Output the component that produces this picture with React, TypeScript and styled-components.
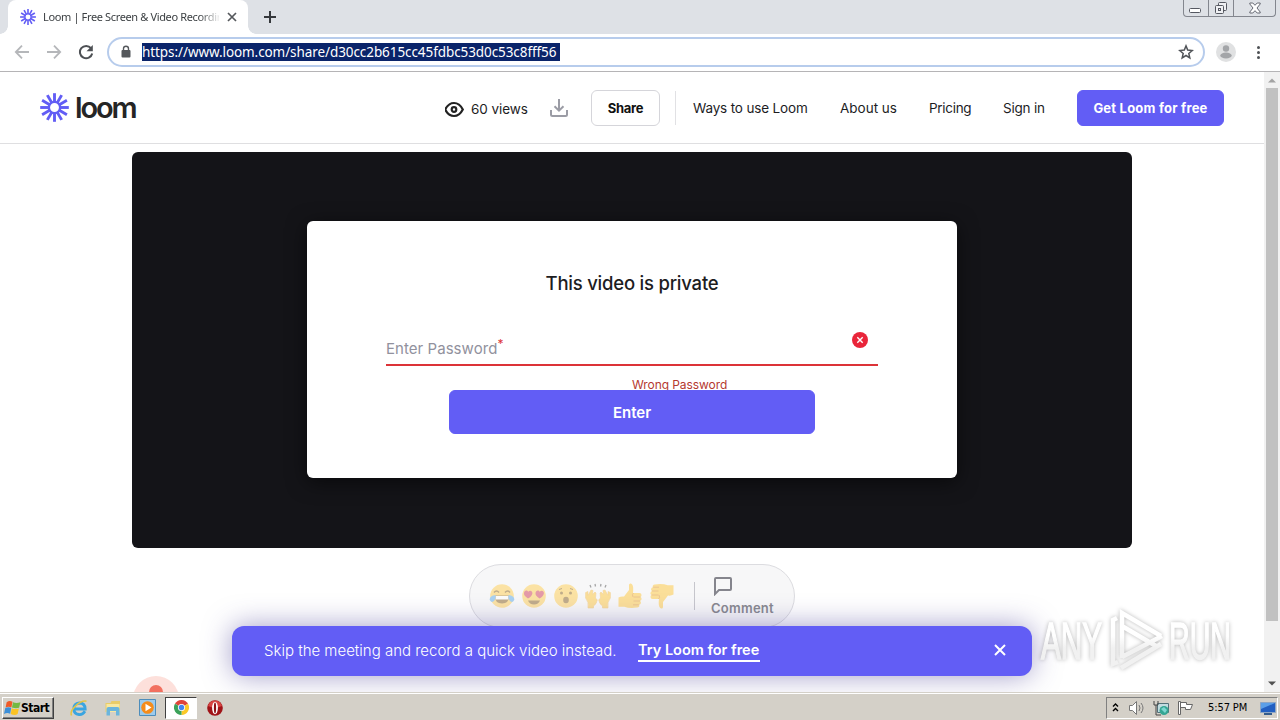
import React from 'react';
import styled, { createGlobalStyle } from 'styled-components';

const GlobalStyle = createGlobalStyle`
  * {
    box-sizing: border-box;
  }
  body {
    margin: 0;
    overflow: hidden;
    background: #fff;
  }
  svg {
    display: block;
    flex: none;
  }
`;

const Screen = styled.div`
  display: flex;
  flex-direction: column;
  position: relative;
  width: 1280px;
  height: 720px;
  overflow: hidden;
  font-family: Inter, 'Liberation Sans', sans-serif;
  color: #1d1d1f;
`;

/* ---------- browser ---------- */

const TabStrip = styled.div`
  display: flex;
  align-items: flex-start;
  height: 34px;
  background: #dee1e6;
`;

const TabCurve = styled.div<{ $side: 'left' | 'right' }>`
  align-self: flex-end;
  width: 8px;
  height: 8px;
  background: radial-gradient(
    circle at ${({ $side }) => ($side === 'left' ? '0 0' : '100% 0')},
    #dee1e6 7.5px,
    #fff 8px
  );
`;

const Tab = styled.div`
  display: flex;
  align-items: center;
  width: 240px;
  height: 34px;
  padding: 0 11px 0 12px;
  border-radius: 8px 8px 0 0;
  background: #fff;
`;

const TabTitle = styled.span`
  flex: none;
  width: 176px;
  margin: 0 8px 0 7px;
  white-space: nowrap;
  font: 11px/16px 'Noto Sans', sans-serif;
  letter-spacing: -0.36px;
  color: #3c4043;
  mask-image: linear-gradient(90deg, #000 156px, transparent 178px);
`;

const NewTab = styled.div`
  padding: 11px 7px;
`;

const WindowButtons = styled.div`
  display: flex;
  width: 93px;
  height: 17px;
  margin: 0 4px 0 auto;
  border: 1px solid #83868e;
  border-top: 0;
  border-radius: 0 0 4px 4px;
`;

const WindowButton = styled.div<{ $width: number }>`
  display: flex;
  align-items: center;
  justify-content: center;
  width: ${({ $width }) => $width}px;
  & + & {
    border-left: 1px solid #83868e;
  }
`;

const Toolbar = styled.div`
  display: flex;
  align-items: center;
  height: 38px;
  padding: 0 12px 2px 14px;
  border-bottom: 1px solid #b5b4b6;
  background: #fff;
`;

const ToolbarIcon = styled.div<{ $gap: number }>`
  margin-right: ${({ $gap }) => $gap}px;
`;

const AddressBar = styled.div`
  display: flex;
  align-items: center;
  width: 1098px;
  height: 30px;
  padding: 0 9px 0 11px;
  border: 2px solid #b7ccec;
  border-radius: 15px;
`;

const Url = styled.span`
  width: 418px;
  height: 18px;
  margin: 0 auto 0 10px;
  background: #0a246a;
  color: #fff;
  white-space: nowrap;
  font: 13.5px/18px 'Noto Sans', sans-serif;
  letter-spacing: -0.08px;
`;

const Avatar = styled.div`
  margin: 0 19px 0 11px;
`;

/* ---------- page ---------- */

const Viewport = styled.div`
  display: flex;
  height: 620px;
`;

const Page = styled.div`
  display: flex;
  flex-direction: column;
  align-items: center;
  position: relative;
  width: 1264px;
  height: 620px;
  overflow: hidden;
`;

const Header = styled.header`
  display: flex;
  align-items: center;
  width: 100%;
  height: 72px;
  padding: 0 40px;
  border-bottom: 1px solid #dfdfe1;
`;

const Wordmark = styled.span`
  width: 62px;
  margin: 0 auto 0 6px;
  font: 600 29px/30px Inter, sans-serif;
  letter-spacing: -2.1px;
  color: #252525;
`;

const Views = styled.span`
  width: 58px;
  margin: 2px 20px 0 6px;
  font-size: 13.5px;
  line-height: 18px;
  letter-spacing: -0.05px;
  white-space: nowrap;
`;

const Button = styled.button<{ $primary?: boolean; $width: number; $spacing?: number }>`
  width: ${({ $width }) => $width}px;
  height: 36px;
  padding: 0;
  border: 1px solid ${({ $primary }) => ($primary ? '#625df5' : '#d5d5da')};
  border-radius: 6px;
  background: ${({ $primary }) => ($primary ? '#625df5' : '#fff')};
  color: ${({ $primary }) => ($primary ? '#fff' : '#111')};
  font: 700 13px/18px Inter, sans-serif;
  letter-spacing: ${({ $spacing = 0 }) => $spacing}px;
  white-space: nowrap;
`;

const ShareButton = styled(Button)`
  margin: 0 15px 0 22px;
`;

const Divider = styled.div<{ $height: number; $color: string }>`
  width: 1px;
  height: ${({ $height }) => $height}px;
  background: ${({ $color }) => $color};
`;

const Nav = styled.nav`
  display: flex;
  gap: 32px;
  margin: 1px 32px 0 17px;
`;

const NavLink = styled.a<{ $width: number; $spacing: number }>`
  width: ${({ $width }) => $width}px;
  font-size: 13.5px;
  line-height: 18px;
  letter-spacing: ${({ $spacing }) => $spacing}px;
  white-space: nowrap;
`;

const Player = styled.div`
  display: flex;
  justify-content: center;
  width: 1000px;
  height: 396px;
  margin: 8px 0 16px;
  padding-top: 69px;
  flex: none;
  border-radius: 6px;
  background: #141418;
`;

const Dialog = styled.form`
  display: flex;
  flex-direction: column;
  align-items: center;
  width: 650px;
  height: 257px;
  border-radius: 6px;
  background: #fff;
  box-shadow: 0 4px 20px rgba(0, 0, 0, 0.55);
`;

const Title = styled.h1`
  margin: 50px 0 0;
  font: 500 18.5px/24px Inter, sans-serif;
  letter-spacing: -0.22px;
  white-space: nowrap;
`;

const Field = styled.div`
  display: flex;
  justify-content: space-between;
  width: 492px;
  height: 51px;
  margin-top: 20px;
  border-bottom: 2px solid #dc3338;
`;

const Label = styled.label`
  padding-top: 24px;
  font-size: 15px;
  line-height: 20px;
  letter-spacing: 0.05px;
  color: #91919d;
  white-space: nowrap;
  sup {
    font-size: 12px;
    line-height: 0;
    vertical-align: 6px;
    color: #dc3338;
  }
`;

const FieldError = styled.div`
  padding: 17px 10px 0 0;
`;

const Message = styled.p`
  align-self: flex-start;
  height: 13px;
  margin: 11px 0 0 325px;
  font-size: 12px;
  line-height: 16px;
  letter-spacing: -0.08px;
  color: #b5392f;
  white-space: nowrap;
`;

const Submit = styled(Button)`
  height: 44px;
  padding-top: 2px;
  font-size: 15px;
  font-weight: 600;
`;

const Reactions = styled.div`
  display: flex;
  align-items: center;
  width: 326px;
  height: 64px;
  padding-left: 19px;
  flex: none;
  border: 1px solid #dcdce0;
  border-radius: 32px;
  background: #f7f7f8;
`;

const EmojiRow = styled.div`
  display: flex;
  gap: 6px;
  margin-right: 19px;
  opacity: 0.5;
`;

const Comment = styled.div`
  display: flex;
  flex-direction: column;
  gap: 4px;
  padding-left: 16px;
  font-size: 13px;
  font-weight: 600;
  line-height: 16px;
  letter-spacing: 0.25px;
  color: #898990;
`;

const Banner = styled.div`
  display: flex;
  align-items: center;
  position: absolute;
  left: 232px;
  top: 554px;
  width: 800px;
  height: 50px;
  padding: 0 25px 2px 32px;
  border-radius: 12px;
  background: #625df5;
  box-shadow: 0 0 28px rgba(70, 60, 150, 0.5);
  color: #fff;
  font-size: 15px;
  line-height: 20px;
  white-space: nowrap;
`;

const BannerText = styled.span`
  width: 374px;
  margin-top: 1px;
  font-weight: 300;
`;

const BannerLink = styled.a`
  width: 122px;
  margin: 2px auto 0 0;
  border-bottom: 2px solid #fff;
  font-size: 14.5px;
  font-weight: 600;
`;

const RecordBubble = styled.div`
  display: flex;
  justify-content: center;
  position: absolute;
  left: 133px;
  top: 604px;
  width: 46px;
  height: 46px;
  padding-top: 9px;
  border-radius: 50%;
  background: #fde0db;
  &::after {
    content: '';
    width: 14px;
    height: 14px;
    border-radius: 50%;
    background: #f2705f;
  }
`;

const Watermark = styled.svg`
  position: absolute;
  left: 1032px;
  top: 602px;
  filter: drop-shadow(0 0 2px rgba(0, 0, 0, 0.28));
`;

const Scrollbar = styled.div`
  display: flex;
  flex-direction: column;
  align-items: center;
  justify-content: space-between;
  width: 16px;
  height: 620px;
  padding: 6px 0 6px;
  background: #f1f1f1;
`;

const Thumb = styled.div`
  width: 12px;
  height: 533px;
  margin: 5px 0 auto;
  background: #c1c1c1;
`;

/* ---------- taskbar ---------- */

const Taskbar = styled.div`
  display: flex;
  align-items: center;
  height: 28px;
  padding: 2px 2px 0;
  border-top: 1px solid #d4d0c8;
  box-shadow: inset 0 1px #fff;
  background: #d4d0c8;
`;

const StartButton = styled.div`
  display: flex;
  align-items: center;
  width: 52px;
  height: 22px;
  padding-left: 1px;
  border: 1px solid;
  border-color: #fff #404040 #404040 #fff;
  box-shadow: inset -1px -1px #808080;
  font: bold 12px/16px 'DejaVu Sans Condensed', 'DejaVu Sans', sans-serif;
  letter-spacing: -0.5px;
  color: #000;
`;

const Task = styled.div<{ $active?: boolean }>`
  display: flex;
  align-items: center;
  justify-content: center;
  width: 32px;
  height: 22px;
  margin-right: 2px;
  border: 1px solid;
  border-color: ${({ $active }) => ($active ? '#404040 #fff #fff #404040' : 'transparent')};
  background: ${({ $active }) => ($active ? '#fff' : 'transparent')};
`;

const TaskList = styled.div`
  display: flex;
  margin-left: 9px;
`;

const Tray = styled.div`
  display: flex;
  align-items: center;
  width: 172px;
  height: 22px;
  margin-left: auto;
  padding-left: 4px;
  border: 1px solid;
  border-color: #808080 #fff #fff #808080;
`;

const TrayIcon = styled.div`
  margin-left: 7px;
`;

const Clock = styled.span`
  width: 52px;
  margin-left: 14px;
  font: 11px/14px 'DejaVu Sans Condensed', 'DejaVu Sans', sans-serif;
  letter-spacing: -0.1px;
  color: #000;
  white-space: nowrap;
`;

/* ---------- icons ---------- */

const LoomMark = ({ size }: { size: number }) => (
  <svg width={size} height={size} viewBox="-15 -15 30 30" fill="none" stroke="#625df5">
    <circle r="5.8" strokeWidth="2.4" />
    {Array.from({ length: 12 }, (_, i) => (
      <path key={i} d="M0 -5.8V-14.8" strokeWidth="3" transform={`rotate(${i * 30})`} />
    ))}
  </svg>
);

const Arrow = ({ back }: { back?: boolean }) => (
  <svg width="16" height="16" viewBox="0 0 16 16" fill="none" stroke="#b5b7ba" strokeWidth="1.8">
    <path d={back ? 'M15 8H2M8 1.6L1.8 8 8 14.4' : 'M1 8h13M8 1.6L14.2 8 8 14.4'} />
  </svg>
);

const Face = ({ children }: { children: React.ReactNode }) => (
  <svg width="26" height="26" viewBox="0 0 26 26">
    <circle cx="13" cy="13" r="11.8" fill="#ffcf52" />
    {children}
  </svg>
);

const Heart = ({ x }: { x: number }) => (
  <path
    transform={`translate(${x} 7)`}
    fill="#d2405c"
    d="M4 8.5C1 6.5-.2 5 0 3 .2.2 3.2-.4 4.2 1.8 5.5-.2 8.6.6 8.4 3.2 8.2 5.4 6.4 7.2 4 8.5z"
  />
);

const JoyFace = () => (
  <Face>
    <path d="M5 9.5q2.5-3 5 0M16 9.5q2.5-3 5 0" fill="none" stroke="#8a6420" strokeWidth="1.4" />
    <path d="M5.5 12.5h15q-.6 8-7.5 8t-7.5-8z" fill="#8a6420" />
    <path d="M6.5 13h13v3.500h-13z" fill="#fff" />
    <path
      d="M6.500 12Q0 13 .8 17q2 4 5 0 1-2 .7-5zM19.500 12q6.500 1 5.700 5-2 4-5 0-1-2-.7-5z"
      fill="#5dadec"
    />
  </Face>
);

const RaisedHands = () => (
  <svg width="26" height="26" viewBox="0 0 26 26">
    <path
      d="M3 25Q4 19 .6 15V9.500L3 8.500v4L6 7l2 .5-.5 4 2.500-2.500 1 1L10.500 15l1.800 2q-.6 4-3.800 6v2zM23 25q-1-6 2.400-10V9.500L23 8.500v4L20 7l-2 .5.5 4-2.500-2.500-1 1 .5 5-1.800 2q.6 4 3.800 6v2z"
      fill="#ffc83d"
      stroke="#eeb040"
      strokeWidth=".6"
    />
    <path d="M5 2l1 2.500M10 1l.5 2.500M16 1l-.5 2.500M21 2l-1 2.500" stroke="#555" strokeWidth="1.300" />
  </svg>
);

const Thumbs = ({ down }: { down?: boolean }) => (
  <svg width="26" height="26" viewBox="0 0 26 26">
    <g transform={down ? 'rotate(180 13 13)' : undefined}>
      <path
        d="M1.500 14.500Q4 13 7 13.500L12 7V2q0-1.800 1.800-1.500C16.500 1 16.500 6 16 10h6.500q2 0 2 2t-1.200 2q1.500.4 1.300 2t-1.600 2q1.200.5.900 2t-1.700 1.700q.7 2.600-2 2.900-8 1-13-.9H1.500z"
        fill="#ffc83d"
      />
      <path
        d="M16.500 14h7M16.500 18h6.500M16 21.800h5.800M16.500 10q-2 1.500-.5 4"
        stroke="#e2952d"
        fill="none"
      />
    </g>
  </svg>
);

const WindowsFlag = () => (
  <svg width="17" height="17" viewBox="0 0 16 16">
    <path d="M2.500 3Q5 1 8 2.500L7 7.800Q4 6.500 1.500 8z" fill="#ef5a28" />
    <path d="M8.500 3q3 1.500 7 0l-1.300 5.300Q11 9.300 7.500 8z" fill="#74b943" />
    <path d="M1.200 8.500Q4 7 6.800 8.300l-1 5.500Q3 12.500 0 14z" fill="#3d8fd8" />
    <path d="M7.300 8.600q3 1.600 6.700.4l-1.200 5.200Q10 16 6.300 14z" fill="#fbc324" />
  </svg>
);

const IEIcon = () => (
  <svg width="18" height="18" viewBox="0 0 18 18" fill="none">
    <path
      d="M15 12.300Q12.500 16 9 15.500 3.800 15 3.800 9.800T9.300 4q5.800.2 5.900 6H5"
      stroke="#3aa5e0"
      strokeWidth="2.800"
    />
    <path d="M1.500 16.500C-1 11 10 1 16.500 2.200" stroke="#e3c444" strokeWidth="1.500" />
  </svg>
);

const FolderIcon = () => (
  <svg width="18" height="18" viewBox="0 0 18 18">
    <path d="M1.500 4h5l1-2h8.500v11H1.500z" fill="#e9cc68" />
    <path d="M2.500 5h13v8h-13z" fill="#f8e8a0" />
    <path d="M2.500 16.500V10q0-2 2-2h9q2 0 2 2v6.500H12V12H6v4.500z" fill="#6bb5dc" />
  </svg>
);

const MediaIcon = () => (
  <svg width="17" height="17" viewBox="0 0 17 17">
    <path d="M.5.5h16v16H.5z" fill="#9ccbed" stroke="#4d8dbb" />
    <circle cx="8.500" cy="8.500" r="6.300" fill="#f58c1b" />
    <path d="M6.500 4.700l6 3.800-6 3.800z" fill="#fff" />
  </svg>
);

const ChromeIcon = () => (
  <svg width="15" height="15" viewBox="0 0 16 16">
    <path d="M8 8L1.070 4A8 8 0 0 1 14.930 4z" fill="#e0443a" />
    <path d="M8 8L14.930 4A8 8 0 0 1 8 16z" fill="#fbc928" />
    <path d="M8 8v8A8 8 0 0 1 1.070 4z" fill="#3ba25a" />
    <circle cx="8" cy="8" r="3.800" fill="#fff" />
    <circle cx="8" cy="8" r="2.900" fill="#4385f0" />
  </svg>
);

const OperaIcon = () => (
  <svg width="16" height="16" viewBox="0 0 16 16">
    <circle cx="8" cy="8" r="7.800" fill="#a01318" />
    <path d="M1 6a7.300 7.300 0 0 1 14 0Q8 9 1 6z" fill="#d84543" />
    <ellipse cx="8" cy="8" rx="2.900" ry="6.200" fill="#fff" />
    <ellipse cx="8" cy="8" rx="1.100" ry="5.400" fill="#8c1015" />
  </svg>
);

const BrowserChrome = () => (
  <>
    <TabStrip>
      <TabCurve $side="left" />
      <Tab>
        <LoomMark size={16} />
        <TabTitle>Loom | Free Screen &amp; Video Recordin</TabTitle>
        <svg width="10" height="10" viewBox="0 0 10 10" stroke="#55585c" strokeWidth="1.700">
          <path d="M1 1l8 8M9 1L1 9" />
        </svg>
      </Tab>
      <TabCurve $side="right" />
      <NewTab>
        <svg width="14" height="12" viewBox="0 0 14 12" stroke="#35383c" strokeWidth="2">
          <path d="M1 6h12M7 0v12" />
        </svg>
      </NewTab>
      <WindowButtons>
        <WindowButton $width={24}>
          <svg width="13" height="14" viewBox="0 0 13 14" fill="#fff" stroke="#555861">
            <rect x=".5" y="7.500" width="11" height="4" rx="1" />
          </svg>
        </WindowButton>
        <WindowButton $width={26}>
          <svg width="14" height="14" viewBox="0 0 14 14" fill="#eff0f3" stroke="#555861">
            <rect x="4.500" y="1.500" width="8" height="8" rx="1" />
            <rect x="1.500" y="4.500" width="8" height="8" rx="1" />
            <rect x="4.500" y="7.500" width="2" height="2" />
          </svg>
        </WindowButton>
        <WindowButton $width={42}>
          <svg width="12" height="12" viewBox="0 0 12 12" fill="#fff" stroke="#666973">
            <path d="M.8 1h3L6 3.300 8.200 1h3v1L8 6l3.200 4v1h-3L6 8.700 3.800 11h-3v-1L4 6 .8 2z" />
          </svg>
        </WindowButton>
      </WindowButtons>
    </TabStrip>
    <Toolbar>
      <ToolbarIcon $gap={16}>
        <Arrow back />
      </ToolbarIcon>
      <ToolbarIcon $gap={16}>
        <Arrow />
      </ToolbarIcon>
      <ToolbarIcon $gap={13}>
        <svg width="16" height="16" viewBox="0 0 16 16">
          <path d="M13 4.200A6.200 6.200 0 1 0 14.200 9.500" fill="none" stroke="#4d5054" strokeWidth="2" />
          <path d="M14.800 1v6.300H8.500z" fill="#4d5054" />
        </svg>
      </ToolbarIcon>
      <AddressBar>
        <svg width="12" height="14" viewBox="0 0 12 14">
          <rect x="1.500" y="5" width="9" height="7.500" rx="1" fill="#55585c" />
          <path d="M3.500 6V3.800a2.500 2.500 0 0 1 5 0V6" fill="none" stroke="#55585c" strokeWidth="1.400" />
        </svg>
        <Url>https://www.loom.com/share/d30cc2b615cc45fdbc53d0c53c8fff56</Url>
        <svg width="16" height="16" viewBox="0 0 16 16" fill="none" stroke="#515459" strokeWidth="1.500">
          <path d="M8 1.900l1.700 4.200 4.500.4-3.400 3 1 4.400L8 11.500l-3.800 2.400 1-4.400-3.400-3 4.500-.4z" />
        </svg>
      </AddressBar>
      <Avatar>
        <svg width="20" height="20" viewBox="0 0 20 20">
          <circle cx="10" cy="10" r="10" fill="#e0e1e2" />
          <circle cx="10" cy="6.500" r="3.200" fill="#a3a5a8" />
          <ellipse cx="10" cy="13.500" rx="5.700" ry="3" fill="#a3a5a8" />
        </svg>
      </Avatar>
      <svg width="6" height="14" viewBox="0 0 6 14" fill="#4d5054">
        <circle cx="3.500" cy="2.500" r="1.500" />
        <circle cx="3.500" cy="7.500" r="1.500" />
        <circle cx="3.500" cy="12.500" r="1.500" />
      </svg>
    </Toolbar>
  </>
);

const PageHeader = () => (
  <Header>
    <LoomMark size={29} />
    <Wordmark>loom</Wordmark>
    <svg width="20" height="20" viewBox="1 0 20 20" fill="none" stroke="#222" strokeWidth="2.200">
      <path d="M1.200 11.500Q4.500 5 10 5t8.800 6.500Q15.500 18 10 18T1.200 11.500z" />
      <circle cx="10" cy="11.500" r="2.300" />
    </svg>
    <Views>60 views</Views>
    <svg width="20" height="20" viewBox="0 0 20 20" fill="none" stroke="#9b9ca5" strokeWidth="2">
      <path d="M2 12v4.500q0 1.500 1.500 1.500h13q1.500 0 1.500-1.500V12M10 1v11.500M5.500 8.200l4.500 4.500 4.500-4.500" />
    </svg>
    <ShareButton $width={69} $spacing={-0.3}>
      Share
    </ShareButton>
    <Divider $height={34} $color="#e1e1e4" />
    <Nav>
      <NavLink $width={115} $spacing={-0.16}>Ways to use Loom</NavLink>
      <NavLink $width={57} $spacing={0}>About us</NavLink>
      <NavLink $width={42} $spacing={-0.3}>Pricing</NavLink>
      <NavLink $width={42} $spacing={-0.22}>Sign in</NavLink>
    </Nav>
    <Button $primary $width={147} $spacing={0.22}>
      Get Loom for free
    </Button>
  </Header>
);

const PasswordDialog = () => (
  <Dialog>
    <Title>This video is private</Title>
    <Field>
      <Label>
        Enter Password<sup>*</sup>
      </Label>
      <FieldError>
        <svg width="16" height="16" viewBox="0 0 16 16">
          <circle cx="8" cy="8" r="8" fill="#e9253a" />
          <path d="M5.300 5.300l5.400 5.400M10.700 5.300l-5.400 5.400" stroke="#fff" strokeWidth="1.400" />
        </svg>
      </FieldError>
    </Field>
    <Message>Wrong Password</Message>
    <Submit $primary $width={366} type="button">
      Enter
    </Submit>
  </Dialog>
);

const ReactionBar = () => (
  <Reactions>
    <EmojiRow>
      <JoyFace />
      <Face>
        <Heart x={3} />
        <Heart x={14.5} />
        <path d="M7 17.500h12q-1.500 4-6 4t-6-4z" fill="#8a6420" />
      </Face>
      <Face>
        <circle cx="8.500" cy="10" r="1.500" fill="#8a6420" />
        <circle cx="17.500" cy="10" r="1.500" fill="#8a6420" />
        <ellipse cx="13" cy="17" rx="2.800" ry="3.200" fill="#8a6420" />
        <path d="M6 6.500l3-1M20 6.500l-3-1" stroke="#8a6420" />
      </Face>
      <RaisedHands />
      <Thumbs />
      <Thumbs down />
    </EmojiRow>
    <Divider $height={28} $color="#c6c6cc" />
    <Comment>
      <svg width="24" height="20" viewBox="0 0 24 20" fill="none" stroke="#85858d" strokeWidth="2">
        <path d="M4 18V3q0-1 1-1h14q1 0 1 1v10q0 1-1 1H8z" />
      </svg>
      Comment
    </Comment>
  </Reactions>
);

const AnyRunMark = () => (
  <Watermark
    width="210"
    height="78"
    viewBox="1032 602 210 78"
    fontFamily="Liberation Sans, sans-serif"
    fontSize="51"
  >
    <defs>
      <linearGradient id="fade" gradientUnits="userSpaceOnUse" x1="0" y1="636" x2="0" y2="648">
        <stop offset="0" stopColor="#fff" />
        <stop offset="1" stopColor="#f1f1f1" />
      </linearGradient>
    </defs>
    <g fill="url(#fade)" stroke="url(#fade)" strokeWidth="1.500">
      <text x="1041" y="659" textLength="61" lengthAdjust="spacingAndGlyphs">ANY</text>
      <text x="1169" y="659" textLength="62" lengthAdjust="spacingAndGlyphs">RUN</text>
    </g>
    <g fill="none" stroke="url(#fade)" strokeWidth="4.500">
      <path d="M1117 618l-4 2v44l5-2M1122 658v-45l39 23M1122 626l34 20M1122 657l40-21M1121 668l40-24" />
    </g>
  </Watermark>
);

const WindowsTaskbar = () => (
  <Taskbar>
    <StartButton>
      <WindowsFlag />
      Start
    </StartButton>
    <TaskList>
      <Task><IEIcon /></Task>
      <Task><FolderIcon /></Task>
      <Task><MediaIcon /></Task>
      <Task $active><ChromeIcon /></Task>
      <Task><OperaIcon /></Task>
    </TaskList>
    <Tray>
      <svg width="9" height="12" viewBox="0 0 9 12" fill="none" stroke="#000" strokeWidth="1.400">
        <path d="M2 4.500L4.500 2 7 4.500M2 9l2.500-2.500L7 9" />
      </svg>
      <TrayIcon>
        <svg width="19" height="16" viewBox="-1 0 19 16" fill="#fff" stroke="#777">
          <path d="M1.500 5.500h3l4-4v13l-4-4h-3z" />
          <path d="M11 5q2 3 0 6M13 3q4 5 0 10" fill="none" />
        </svg>
      </TrayIcon>
      <TrayIcon>
        <svg width="17" height="16" viewBox="0 0 17 16">
          <path d="M4.500 3.500h11v9h-11z" fill="#c3dce0" stroke="#53717a" />
          <circle cx="11" cy="10.500" r="4.500" fill="#35a693" />
          <path d="M8 9l3-2 3 3-2 3z" fill="#7ed6d1" />
          <path d="M1 1v4h4V1M3 5v10h5" fill="none" stroke="#444" />
        </svg>
      </TrayIcon>
      <TrayIcon>
        <svg width="17" height="16" viewBox="0 0 17 16" fill="#fff" stroke="#666">
          <path d="M1.500 1.500v13h2v-13zM3.500 2.500h6v2h6l-2 5h-5v-2h-5z" />
        </svg>
      </TrayIcon>
      <Clock>5:57 PM</Clock>
      <svg width="16" height="14" viewBox="0 0 16 14">
        <path d="M.5 1.500h15v10H.5z" fill="#225fc1" stroke="#8da6c5" />
        <path d="M1 2h14L1 8z" fill="#5b9fe8" />
        <path d="M4 13h8" stroke="#345c8c" strokeWidth="2" />
      </svg>
    </Tray>
  </Taskbar>
);

const App = () => (
  <>
    <GlobalStyle />
    <Screen>
      <BrowserChrome />
      <Viewport>
        <Page>
          <PageHeader />
          <Player>
            <PasswordDialog />
          </Player>
          <ReactionBar />
          <RecordBubble />
          <Banner>
            <BannerText>Skip the meeting and record a quick video instead.</BannerText>
            <BannerLink>Try Loom for free</BannerLink>
            <svg width="14" height="14" viewBox="0 0 14 14" stroke="#fff" strokeWidth="2">
              <path d="M2 2l10 10M12 2L2 12" />
            </svg>
          </Banner>
        </Page>
        <Scrollbar>
          <svg width="8" height="5" viewBox="0 0 8 5" fill="#a3a3a3">
            <path d="M0 4.500L4 .5l4 4z" />
          </svg>
          <Thumb />
          <svg width="8" height="5" viewBox="0 0 8 5" fill="#505050">
            <path d="M0 .5l4 4 4-4z" />
          </svg>
        </Scrollbar>
      </Viewport>
      <WindowsTaskbar />
      <AnyRunMark />
    </Screen>
  </>
);

export default App;
